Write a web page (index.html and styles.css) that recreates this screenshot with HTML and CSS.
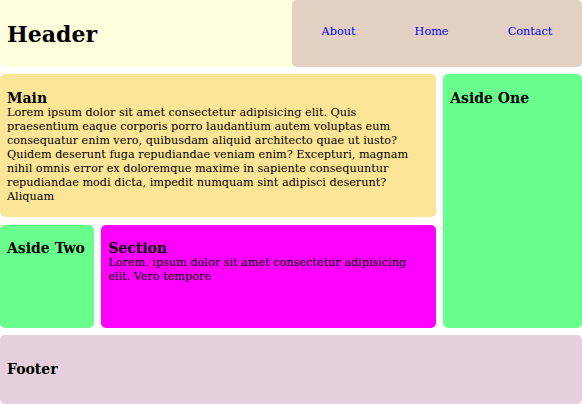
FILE: index.html
```html
<!DOCTYPE html>
<html>
<head>
<meta charset="utf-8">
<link rel="stylesheet" href="styles.css">
</head>
<body>
<div class="page">
  <header class="header">
    <h1 class="title">Header</h1>
    <nav class="nav">
      <a href="#">About</a>
      <a href="#">Home</a>
      <a href="#">Contact</a>
    </nav>
  </header>
  <main class="main box">
    <h2 class="heading">Main</h2>
    <p class="text">Lorem ipsum dolor sit amet consectetur adipisicing elit. Quis praesentium eaque corporis porro laudantium autem voluptas eum consequatur enim vero, quibusdam aliquid architecto quae ut iusto? Quidem deserunt fuga repudiandae veniam enim? Excepturi, magnam nihil omnis error ex doloremque maxime in sapiente consequuntur repudiandae modi dicta, impedit numquam sint adipisci deserunt? Aliquam</p>
  </main>
  <aside class="aside-one box">
    <h2 class="heading">Aside One</h2>
  </aside>
  <aside class="aside-two box">
    <h2 class="heading">Aside Two</h2>
  </aside>
  <section class="section box">
    <h2 class="heading">Section</h2>
    <p class="text">Lorem, ipsum dolor sit amet consectetur adipisicing elit. Vero tempore</p>
  </section>
  <footer class="footer box">
    <h2 class="heading">Footer</h2>
  </footer>
</div>
</body>
</html>
```

FILE: styles.css
```css
html, body {
  margin: 0;
  padding: 0;
}
body {
  font-family: "DejaVu Serif", serif;
  font-size: 11.25px;
  color: #000;
  background: #fff;
}
.page {
  display: grid;
  grid-template-columns: 94fr 335fr 139fr;
  grid-template-rows: 67px 143px 103px 69px;
  gap: 7.3px;
  width: 582px;
  height: 404px;
}
.header {
  grid-column: 1 / 4;
  display: flex;
  align-items: center;
  justify-content: space-between;
  background: #ffffdd;
  border-radius: 0 0 5px 5px;
}
.title {
  margin: 0 0 0 7px;
  font-size: 22px;
  font-weight: bold;
}
.nav {
  align-self: stretch;
  width: 290px;
  display: flex;
  align-items: center;
  justify-content: space-around;
  padding-bottom: 3.4px;
  box-sizing: border-box;
  background: #e2d1c3;
  border-radius: 5px;
}
.nav a {
  color: #0000ee;
  text-decoration: none;
  font-size: 11.25px;
}
.box {
  border-radius: 5px;
  padding: 7px;
  box-sizing: border-box;
}
.heading {
  margin: 8.3px 0 0;
  font-size: 14px;
  font-weight: bold;
}
.text {
  margin: 0;
  line-height: 14px;
}
.main {
  grid-column: 1 / 3;
  background: #fce597;
}
.aside-one {
  grid-column: 3;
  grid-row: 2 / 4;
  background: #69ff8c;
}
.aside-two {
  grid-column: 1;
  grid-row: 3;
  background: #69ff8c;
}
.section {
  grid-column: 2;
  grid-row: 3;
  background: #ff00ff;
}
.footer {
  grid-column: 1 / 4;
  display: flex;
  align-items: center;
  background: #e6cfdc;
}
.footer .heading {
  margin: 0;
}
```
